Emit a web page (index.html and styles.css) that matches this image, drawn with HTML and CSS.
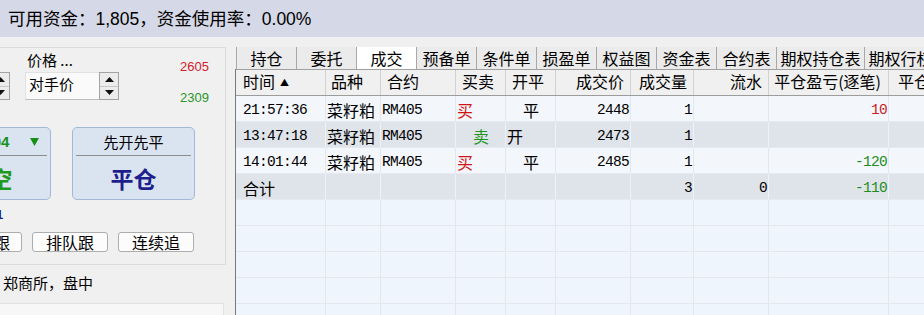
FILE: index.html
```html
<!DOCTYPE html>
<html lang="zh-CN">
<head>
<meta charset="utf-8">
<title>成交</title>
<link rel="stylesheet" href="styles.css">
</head>
<body>
<div class="app">
  <div class="topbar">可用资金：1,805，资金使用率：0.00%</div>
  <div class="main">
    <div class="left">
      <div class="group">
        <div class="row-a">
          <div class="spin spin-cut">
            <div class="half"><svg width="9" height="5" viewBox="0 0 9 5"><path d="M0 5 L4.5 0 L9 5 Z" fill="#111"/></svg></div>
            <div class="half"><svg width="9" height="5" viewBox="0 0 9 5"><path d="M0 0 L4.5 5 L9 0 Z" fill="#111"/></svg></div>
          </div>
          <div class="price-col">
            <div class="price-label">价格 ...</div>
            <div class="combo">
              <div class="combo-val">对手价</div>
              <div class="spin">
                <div class="half"><svg width="9" height="5" viewBox="0 0 9 5"><path d="M0 5 L4.5 0 L9 5 Z" fill="#111"/></svg></div>
                <div class="half"><svg width="9" height="5" viewBox="0 0 9 5"><path d="M0 0 L4.5 5 L9 0 Z" fill="#111"/></svg></div>
              </div>
            </div>
          </div>
          <div class="quotes">
            <div class="ask">2605</div>
            <div class="bid">2309</div>
          </div>
        </div>
        <div class="row-b">
          <div class="bigbtn bigbtn-cut">
            <div class="bb-top bb-top-price"><span class="bb-price">2304</span><svg class="bb-arrow" width="9" height="8" viewBox="0 0 9 8"><path d="M0 0 L9 0 L4.5 8 Z" fill="#189018"/></svg></div>
            <div class="bb-main short">开空</div>
          </div>
          <div class="bigbtn">
            <div class="bb-top">先开先平</div>
            <div class="bb-main">平仓</div>
          </div>
        </div>
        <div class="row-c"><span class="lots">1</span></div>
        <div class="row-d">
          <button class="btn btn-cut">超价跟</button>
          <button class="btn">排队跟</button>
          <button class="btn">连续追</button>
        </div>
      </div>
      <div class="status">郑商所，盘中</div>
      <div class="lower"></div>
    </div>
    <div class="right">
      <div class="tabs">
        <div class="tab">持仓</div>
        <div class="tab">委托</div>
        <div class="tab active">成交</div>
        <div class="tab">预备单</div>
        <div class="tab">条件单</div>
        <div class="tab">损盈单</div>
        <div class="tab">权益图</div>
        <div class="tab">资金表</div>
        <div class="tab">合约表</div>
        <div class="tab wide">期权持仓表</div>
        <div class="tab wide">期权行权表</div>
      </div>
      <div class="grid">
        <div class="row hrow">
          <div class="c c1 hl">时间<span class="sort">▲</span></div>
          <div class="c c2 hl">品种</div>
          <div class="c c3 hl">合约</div>
          <div class="c c4 hl">买卖</div>
          <div class="c c5 hl">开平</div>
          <div class="c c6 hr">成交价</div>
          <div class="c c7 hr">成交量</div>
          <div class="c c8 hr">流水</div>
          <div class="c c9 hr">平仓盈亏(逐笔)</div>
          <div class="c c10 hl2">平仓盈亏(逐日)</div>
        </div>
        <div class="row drow odd">
          <div class="c c1 dl m">21:57:36</div>
          <div class="c c2 dl">菜籽粕</div>
          <div class="c c3 dl m">RM405</div>
          <div class="c c4 dl buy">买</div>
          <div class="c c5 dl">　平</div>
          <div class="c c6 dr m">2448</div>
          <div class="c c7 dr m">1</div>
          <div class="c c8 dr m"></div>
          <div class="c c9 dr m pos">10</div>
          <div class="c c10"></div>
        </div>
        <div class="row drow even">
          <div class="c c1 dl m">13:47:18</div>
          <div class="c c2 dl">菜籽粕</div>
          <div class="c c3 dl m">RM405</div>
          <div class="c c4 dl sell">　卖</div>
          <div class="c c5 dl">开</div>
          <div class="c c6 dr m">2473</div>
          <div class="c c7 dr m">1</div>
          <div class="c c8 dr m"></div>
          <div class="c c9 dr m"></div>
          <div class="c c10"></div>
        </div>
        <div class="row drow odd">
          <div class="c c1 dl m">14:01:44</div>
          <div class="c c2 dl">菜籽粕</div>
          <div class="c c3 dl m">RM405</div>
          <div class="c c4 dl buy">买</div>
          <div class="c c5 dl">　平</div>
          <div class="c c6 dr m">2485</div>
          <div class="c c7 dr m">1</div>
          <div class="c c8 dr m"></div>
          <div class="c c9 dr m neg">-120</div>
          <div class="c c10"></div>
        </div>
        <div class="row drow even">
          <div class="c c1 dl">合计</div>
          <div class="c c2"></div>
          <div class="c c3"></div>
          <div class="c c4"></div>
          <div class="c c5"></div>
          <div class="c c6"></div>
          <div class="c c7 dr m">3</div>
          <div class="c c8 dr m">0</div>
          <div class="c c9 dr m neg">-110</div>
          <div class="c c10"></div>
        </div>
        <div class="row erow"><div class="c c1"></div><div class="c c2"></div><div class="c c3"></div><div class="c c4"></div><div class="c c5"></div><div class="c c6"></div><div class="c c7"></div><div class="c c8"></div><div class="c c9"></div><div class="c c10"></div></div>
        <div class="row erow"><div class="c c1"></div><div class="c c2"></div><div class="c c3"></div><div class="c c4"></div><div class="c c5"></div><div class="c c6"></div><div class="c c7"></div><div class="c c8"></div><div class="c c9"></div><div class="c c10"></div></div>
        <div class="row erow"><div class="c c1"></div><div class="c c2"></div><div class="c c3"></div><div class="c c4"></div><div class="c c5"></div><div class="c c6"></div><div class="c c7"></div><div class="c c8"></div><div class="c c9"></div><div class="c c10"></div></div>
        <div class="row erow"><div class="c c1"></div><div class="c c2"></div><div class="c c3"></div><div class="c c4"></div><div class="c c5"></div><div class="c c6"></div><div class="c c7"></div><div class="c c8"></div><div class="c c9"></div><div class="c c10"></div></div>
        <div class="row erow"><div class="c c1"></div><div class="c c2"></div><div class="c c3"></div><div class="c c4"></div><div class="c c5"></div><div class="c c6"></div><div class="c c7"></div><div class="c c8"></div><div class="c c9"></div><div class="c c10"></div></div>
      </div>
    </div>
  </div>
</div>
</body>
</html>
```
FILE: styles.css
```css
* { box-sizing: border-box; }
html, body { margin: 0; padding: 0; }
body {
  width: 924px;
  height: 315px;
  overflow: hidden;
  background: #f0f0f0;
  font-family: "Noto Sans CJK SC", sans-serif;
  color: #000;
}
.app { width: 924px; height: 315px; overflow: hidden; }

.topbar {
  height: 37px;
  background: #d5d8e6;
  display: flex;
  align-items: center;
  padding-left: 8px;
  font-family: "Liberation Sans", "Noto Sans CJK SC", sans-serif;
  font-size: 17.5px;
  line-height: 20px;
  white-space: nowrap;
}

.main { display: flex; height: 278px; }

/* ---------- left panel ---------- */
.left {
  width: 226px;
  flex: none;
  overflow: hidden;
  display: flex;
  flex-direction: column;
}
.group {
  margin-top: 10px;
  height: 218px;
  border-top: 1px solid #dcdcdc;
  border-right: 1px solid #dcdcdc;
  border-bottom: 1px solid #dcdcdc;
}
.row-a { display: flex; height: 57px; }
.spin {
  display: flex;
  flex-direction: column;
  border: 1px solid #a3a3a3;
  background: #ececec;
  width: 20px;
  height: 28px;
  flex: none;
}
.spin .half {
  flex: 1;
  display: flex;
  align-items: center;
  justify-content: center;
}
.spin .half + .half { border-top: 1px solid #c8c8c8; }
.spin-cut { margin-left: -10px; margin-top: 24px; }
.price-col { margin-left: 15px; width: 94px; flex: none; }
.price-label {
  height: 24px;
  line-height: 24px;
  font-size: 15px;
  padding-left: 2px;
  white-space: nowrap;
}
.combo { display: flex; height: 28px; }
.combo-val {
  width: 74px;
  flex: none;
  background: #fafafa;
  border-top: 1px solid #e2e2e2;
  border-left: 1px solid #e2e2e2;
  border-bottom: 1px solid #bdbdbd;
  font-size: 15px;
  line-height: 22px;
  padding-left: 3px;
}
.quotes {
  margin-left: 61px;
  padding-top: 12px;
  font-family: "Liberation Sans", sans-serif;
  font-size: 13px;
  line-height: 14px;
}
.ask { color: #d2202c; }
.bid { color: #2a962a; margin-top: 17px; }

.row-b { display: flex; margin-top: 22px; height: 73px; }
.bigbtn {
  width: 123px;
  flex: none;
  border: 1px solid #a3b8d6;
  border-radius: 5px;
  background: #dae4f1;
  display: flex;
  flex-direction: column;
}
.bigbtn-cut { margin-left: -72px; }
.bigbtn + .bigbtn { margin-left: 21px; }
.bb-top {
  height: 28px;
  margin: 0 3px;
  border-bottom: 1px solid #8e8e8e;
  display: flex;
  align-items: center;
  justify-content: center;
  font-size: 15px;
  line-height: 18px;
}
.bb-top-price { justify-content: flex-start; padding-left: 44px; }
.bb-price {
  font-family: "Liberation Sans", sans-serif;
  font-weight: 700;
  font-size: 15px;
  color: #189018;
}
.bb-arrow { margin-left: 21px; }
.bb-main {
  flex: 1;
  display: flex;
  align-items: center;
  justify-content: center;
  font-size: 23px;
  font-weight: 700;
  color: #1e1e8c;
}
.bb-main.short { color: #1f9a1f; }

.row-c { height: 32px; padding-top: 0; }
.lots {
  display: inline-block;
  margin-left: -4px;
  font-family: "Liberation Sans", sans-serif;
  font-weight: 700;
  font-size: 13px;
  line-height: 16px;
  color: #1a1a80;
}

.row-d { display: flex; gap: 10px; height: 20px; }
.btn {
  width: 76px;
  height: 20px;
  flex: none;
  border: 1px solid #adadad;
  border-radius: 3px;
  background: #fcfcfc;
  font-family: "Noto Sans CJK SC", sans-serif;
  font-size: 16px;
  line-height: 18px;
  padding: 0;
  color: #000;
}
.btn-cut { margin-left: -54px; text-align: right; padding-right: 11px; }

.status {
  height: 38px;
  line-height: 36px;
  font-size: 15px;
  padding-left: 3px;
  white-space: nowrap;
}
.lower {
  flex: 1;
  margin-right: 2px;
  border-top: 1px solid #e3e3e3;
  border-right: 1px solid #e3e3e3;
  background: #f7f7f7;
}

/* ---------- right panel ---------- */
.right {
  flex: 1;
  min-width: 0;
  padding-left: 9px;
  padding-top: 10px;
  overflow: hidden;
}
.tabs { display: flex; height: 22px; padding-left: 1px; }
.tab {
  flex: none;
  width: 60px;
  border-right: 1px solid #a8a8a8;
  background: #ebebeb;
  font-size: 16px;
  line-height: 22px;
  text-align: center;
  white-space: nowrap;
  overflow: hidden;
}
.tab:first-child { width: 61px; border-left: 1px solid #a8a8a8; }
.tab.active { background: #ffffff; }
.tab.wide { width: 88px; }

.grid {
  border-left: 1px solid #7a7a7a;
  background: #eef5fd;
  height: 246px;
  overflow: hidden;
}
.row { display: flex; height: 26px; }
.c {
  flex: none;
  height: 100%;
  border-right: 1px solid #e2e7ee;
  white-space: nowrap;
  font-size: 16px;
  line-height: 22px;
}
.c1 { width: 90px; }
.c2 { width: 55px; }
.c3 { width: 75px; }
.c4 { width: 50px; }
.c5 { width: 50px; }
.c6 { width: 75px; }
.c7 { width: 63px; }
.c8 { width: 75px; }
.c9 { width: 120px; }
.c10 { width: 80px; }

.hrow {
  height: 27px;
  background: #f0f0f0;
  border-top: 1px solid #a0a0a0;
  border-bottom: 1px solid #9c9c9c;
}
.hrow .c { border-right-color: #d2d2d2; line-height: 22px; }
.hl { padding-left: 6px; }
.hrow .c1 { padding-left: 7px; }
.hrow .c2 { padding-left: 5px; }
.hr { text-align: right; padding-right: 6px; }
.hrow .c9 { padding-right: 7px; }
.hl2 { padding-left: 9px; }
.sort { font-size: 9px; margin-left: 5px; vertical-align: 2px; }

.drow { border-bottom: 1px solid #e6eaf0; }
.drow .c { line-height: 22px; padding-top: 3px; }
.odd { background: #f3f7fc; }
.even { background: #dfe3ea; }
.even .c { border-right-color: #eef1f5; }
.erow { border-bottom: 1px solid #e3e8ef; }

.dl { padding-left: 1px; }
.drow .c1 { padding-left: 7px; }
.dr { text-align: right; padding-right: 1px; }
.m {
  font-family: "Liberation Mono", monospace;
  font-size: 14.5px;
  letter-spacing: -0.7px;
}
.buy { color: #d01414; }
.sell { color: #1e961e; }
.pos { color: #c81e1e; }
.neg { color: #1e8c1e; }
```
